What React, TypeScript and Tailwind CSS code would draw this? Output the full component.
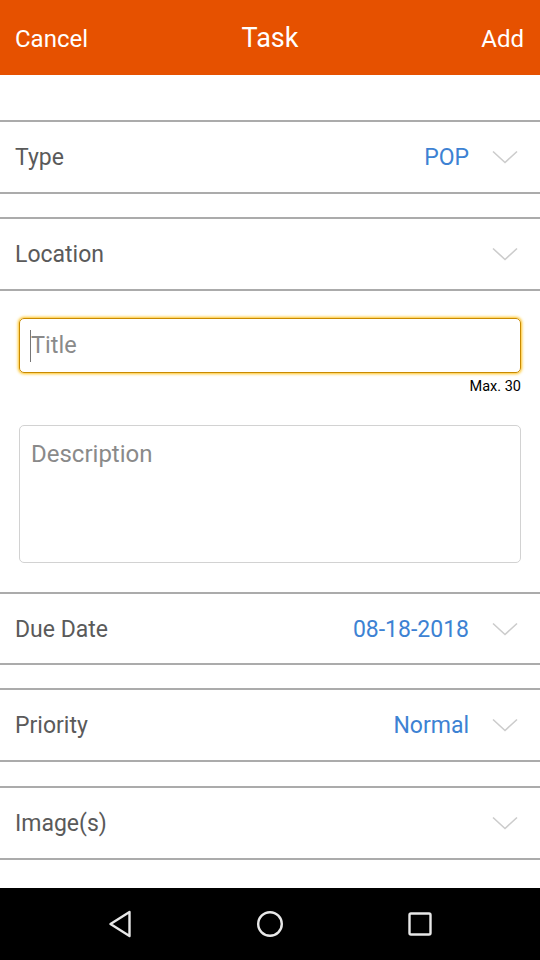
import type { ReactNode } from 'react';

function Chevron() {
  return (
    <svg width="26" height="14" viewBox="0 0 26 14" fill="none" className="shrink-0">
      <path d="M1 1.5 L13 12.5 L25 1.5" stroke="#cccccc" strokeWidth="1.6" />
    </svg>
  );
}

function PickerRow({ label, value, h = 'h-[74px]' }: { label: string; value?: string; h?: string }) {
  return (
    <div className={`flex ${h} items-center border-y-2 border-[#ababab] pl-[15px] pr-[22px]`}>
      <span className="flex-1 pt-[3px] text-[23px] text-[#5a5a5a]">{label}</span>
      {value ? <span className="mr-[23px] pt-[3px] text-[23px] text-[#3d82d3]">{value}</span> : null}
      <Chevron />
    </div>
  );
}

function Gap({ h }: { h: string }) {
  return <div className={h} />;
}

function NavButton({ children }: { children: ReactNode }) {
  return <div className="flex h-[72px] w-[72px] items-center justify-center">{children}</div>;
}

export default function App() {
  return (
    <div className="flex h-[960px] w-[540px] flex-col bg-white font-['Roboto','Liberation_Sans',sans-serif]">
      <header className="relative flex h-[75px] shrink-0 items-center justify-between bg-[#e65100] pl-[15px] pr-[16px] text-white">
        <span className="pt-[2px] text-[24px]">Cancel</span>
        <span className="absolute left-1/2 -translate-x-1/2 pt-[2px] text-[27px]">Task</span>
        <span className="pt-[2px] text-[24px]">Add</span>
      </header>

      <Gap h="h-[45px]" />
      <PickerRow label="Type" value="POP" />
      <Gap h="h-[23px]" />
      <PickerRow label="Location" />

      <div className="flex h-[301px] flex-col px-[19px] pt-[27px]">
        <div className="flex h-[55px] items-center rounded-[5px] border-[1.5px] border-[#c98a00] pl-[10px] shadow-[0_0_3px_1px_#ffc21a]">
          <span className="h-[32px] w-px bg-[#777]" />
          <span className="pt-[1px] text-[23.5px] text-[#8a8a8a]">Title</span>
        </div>
        <div className="mt-[6px] text-right text-[14.5px] leading-[16px] text-black">Max. 30</div>
        <div className="mt-[30px] h-[138px] rounded-[5px] border border-[#d2d2d2] px-[11px] pt-[12px] text-[24px] leading-[32px] text-[#8a8a8a]">
          Description
        </div>
      </div>

      <PickerRow label="Due Date" value="08-18-2018" h="h-[73px]" />
      <Gap h="h-[23px]" />
      <PickerRow label="Priority" value="Normal" />
      <Gap h="h-[24px]" />
      <PickerRow label="Image(s)" />
      <div className="flex-1" />

      <nav className="flex h-[72px] shrink-0 items-center justify-between bg-black px-[84px]">
        <NavButton>
          <svg width="26" height="30" viewBox="0 0 26 30" fill="none">
            <path d="M22.5 3 L3.5 15 L22.5 27 Z" stroke="#e8e8e8" strokeWidth="2.4" strokeLinejoin="round" />
          </svg>
        </NavButton>
        <NavButton>
          <svg width="28" height="28" viewBox="0 0 28 28" fill="none">
            <circle cx="14" cy="14" r="11.8" stroke="#e8e8e8" strokeWidth="2.4" />
          </svg>
        </NavButton>
        <NavButton>
          <svg width="26" height="26" viewBox="0 0 26 26" fill="none">
            <rect x="2.5" y="2.5" width="21" height="21" rx="1.5" stroke="#e8e8e8" strokeWidth="2.4" />
          </svg>
        </NavButton>
      </nav>
    </div>
  );
}
